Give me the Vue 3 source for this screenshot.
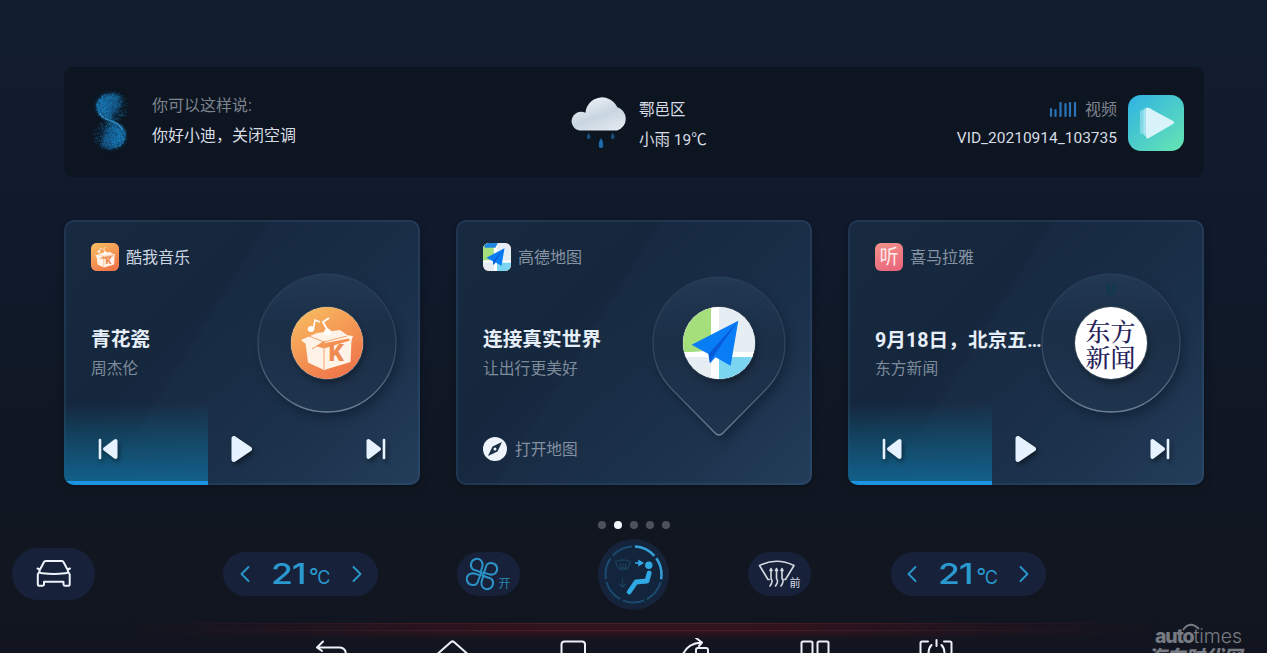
<script setup>
const cards = [
  {
    kind: 'music',
    app: '酷我音乐',
    title: '青花瓷',
    subtitle: '周杰伦',
    progress: 144,
    active: true,
  },
  {
    kind: 'map',
    app: '高德地图',
    title: '连接真实世界',
    subtitle: '让出行更美好',
    action: '打开地图',
  },
  {
    kind: 'radio',
    app: '喜马拉雅',
    title: '9月18日，北京五…',
    subtitle: '东方新闻',
    progress: 144,
  },
]

const activePage = 1

// Particle cloud of the voice assistant logo. The two lobes mirror each other.
const particles = buildParticles(1500)

function buildParticles(count) {
  let seed = 11
  const random = () => {
    seed = (seed * 16807) % 2147483647
    return seed / 2147483647
  }
  const list = []
  while (list.length < count) {
    const angle = random() * Math.PI * 2
    const radius = Math.sqrt(random()) + random() * 0.12
    const x = 30 + Math.cos(angle) * radius * 15.5
    const y = 18 + Math.sin(angle) * radius * 13.5
    const fade = Math.max(0, Math.min(1, (x - 14) / 32))
    if (random() < fade * 0.85)
      continue
    const mirrored = list.length % 2
    list.push({
      x: (mirrored ? 56 - x : x).toFixed(1),
      y: (mirrored ? 64 - y : y).toFixed(1),
      o: (0.7 - fade * 0.45).toFixed(2),
    })
  }
  return list
}
</script>

<template>
  <div class="screen">
    <svg class="defs" width="0" height="0">
      <defs>
        <linearGradient id="orange" x1="0" y1="0" x2="0.6" y2="1">
          <stop offset="0" stop-color="#f8c162" />
          <stop offset="1" stop-color="#f0774a" />
        </linearGradient>
        <linearGradient id="rim" x1="0" y1="0" x2="0" y2="1">
          <stop offset="0" stop-color="#5f7c9c" stop-opacity="0.12" />
          <stop offset="0.55" stop-color="#7b93ad" stop-opacity="0.3" />
          <stop offset="1" stop-color="#93a6ba" stop-opacity="0.7" />
        </linearGradient>
        <linearGradient id="plate" x1="0" y1="0" x2="0" y2="1">
          <stop offset="0" stop-color="#243b55" stop-opacity="0.9" />
          <stop offset="0.4" stop-color="#1b2f47" />
          <stop offset="1" stop-color="#1f344d" />
        </linearGradient>
      </defs>
      <symbol id="kuwo" viewBox="0 0 72 72">
        <rect width="72" height="72" fill="url(#orange)" />
        <g fill="#fff3e8">
          <path d="M14.500 36 33 41.500V63L17 55.500Z" />
          <path d="M33 41.500 60.500 33 59.500 55 33 63Z" />
          <path d="M10 33 26 26 34 33 21 42Z" />
          <path d="M26 26 49 23 60.500 31 34 36Z" />
          <path d="M55 28 62 29 60 35Z" />
        </g>
        <path d="M33 41.500V62M18 29 33 35 56 29M33 35V41M21 42 34 34" fill="none" stroke="#f3a26c" stroke-width="1" />
        <g fill="#fff" stroke="#fff">
          <ellipse cx="20" cy="22" rx="3" ry="2.500" />
          <path d="M22.500 21 24 13 29 15" fill="none" stroke-width="1.600" />
          <circle cx="36.500" cy="25" r="3" />
          <path d="M37 24 32 15 38 11" fill="none" stroke-width="1.800" />
        </g>
        <text x="37.500" y="54" class="box-letter">K</text>
      </symbol>
      <symbol id="amap" viewBox="0 0 72 72">
        <rect width="72" height="72" fill="#e6edf3" />
        <path d="M0 0H28V43L0 46Z" fill="#a4df7c" />
        <path d="M36 50H72V72H36Z" fill="#79d5f0" />
        <path d="M28 0H36V72H28ZM0 45H72V50H0Z" fill="#fff" />
        <path d="M55.300 13.700 8.600 37.700 25.500 47 27 56.300 32.600 50.300 47.600 58.700Z" fill="#087df5" />
        <path d="M55.300 13.700 25.500 47 27 56.300 31 48Z" fill="#075bd8" />
      </symbol>
    </svg>

    <header class="status-bar">
      <div class="assistant">
        <svg class="swirl" width="56" height="66" viewBox="0 0 56 66">
          <defs>
            <filter id="haze" x="-40%" y="-40%" width="180%" height="180%">
              <feGaussianBlur stdDeviation="2.2" />
            </filter>
          </defs>
          <g filter="url(#haze)" fill="#14639c" opacity="0.75">
            <path d="M28 31C18 29 12 22 14 14C17 5 28 3 36 7C40 14 32 20 28 31Z" />
            <path d="M28 33C38 35 44 42 42 50C39 59 28 61 20 57C16 50 24 44 28 33Z" />
          </g>
          <circle v-for="(p, i) in particles" :key="i" :cx="p.x" :cy="p.y" r="0.5" :opacity="p.o" fill="#1d86c4" />
          <path d="M17 24C20 30 25 31 28 32C31 33 36 34 39 40" fill="none" stroke="#4aa9df" stroke-width="1.2" stroke-linecap="round" opacity="0.7" />
        </svg>
        <div class="lines">
          <span class="muted">你可以这样说:</span>
          <span>你好小迪，关闭空调</span>
        </div>
      </div>

      <div class="weather">
        <svg width="60" height="60" viewBox="0 0 56 56">
          <defs>
            <linearGradient id="cloud" x1="0.2" y1="0" x2="0.8" y2="1">
              <stop offset="0" stop-color="#f0f3f7" />
              <stop offset="0.55" stop-color="#c8d5e0" />
              <stop offset="1" stop-color="#e3e9ef" />
            </linearGradient>
          </defs>
          <path d="M10.500 35A8.800 8.800 0 1 1 13.500 18.500A15.500 15.500 0 0 1 43 13A11.500 11.500 0 0 1 43 35Z" fill="url(#cloud)" />
          <path d="M16.500 38c-4 6 4 6 0 0zM39 38c-4 6 4 6 0 0z" fill="#1d4f7c" stroke="#1d4f7c" />
          <path d="M28 43c-6 10.500 6 10.500 0 0z" fill="#1d6cae" stroke="#1d6cae" />
        </svg>
        <div class="lines">
          <span>鄠邑区</span>
          <span>小雨 19℃</span>
        </div>
      </div>

      <div class="media">
        <div class="lines right">
          <span class="muted source">
            <svg width="28" height="16" viewBox="0 0 28 16">
              <path d="M2 7V14M6.500 8V14M11.500 1V14M16.500 2V14M21 1V14M26 1V14" stroke="#2b72b8" stroke-width="2.200" stroke-linecap="round" />
            </svg>
            视频
          </span>
          <span class="file">VID_20210914_103735</span>
        </div>
        <svg width="56" height="56" viewBox="0 0 56 56">
          <defs>
            <linearGradient id="teal" x1="0" y1="0" x2="0.9" y2="1">
              <stop offset="0" stop-color="#2fb2e4" />
              <stop offset="1" stop-color="#64e3b4" />
            </linearGradient>
          </defs>
          <rect width="56" height="56" rx="13" fill="url(#teal)" />
          <rect x="12" y="15" width="10" height="24" rx="2" fill="#a8e5f3" opacity="0.6" />
          <rect x="15.500" y="13" width="8" height="28" rx="2" fill="#b5e9f5" opacity="0.7" />
          <path d="M21 13 45 26Q47.500 27.500 45 29L21 43Q18 44.500 18 41.500V14.500Q18 11.500 21 13Z" fill="#d8f3fa" />
        </svg>
      </div>
    </header>

    <main class="cards">
      <section v-for="card in cards" :key="card.kind" class="card" :class="card.kind">
        <div v-if="card.progress" class="progress" :style="{ width: `${card.progress}px` }" />

        <svg v-if="card.kind === 'map'" class="disc" width="150" height="180" viewBox="0 0 150 180">
          <path class="plate" d="M75 168Q77 168 79 166L122 122.400A66 66 0 1 0 28 122.400L71 166Q73 168 75 168Z" />
        </svg>
        <svg v-else class="disc" width="150" height="180" viewBox="0 0 150 180">
          <circle class="plate" cx="75" cy="76" r="69" />
          <path v-if="card.kind === 'radio'" d="M72 16V24Q75 29 78 24V16" fill="none" stroke="#13384f" stroke-width="3.500" />
        </svg>

        <div class="cover">
          <svg v-if="card.kind === 'music'" width="72" height="72"><use href="#kuwo" /></svg>
          <svg v-else-if="card.kind === 'map'" width="72" height="72"><use href="#amap" /></svg>
          <span v-else>东方<br>新闻</span>
        </div>

        <div class="app" :class="{ active: card.active }">
          <span class="app-icon">
            <svg v-if="card.kind === 'music'" width="28" height="28" viewBox="0 0 72 72"><use href="#kuwo" /></svg>
            <svg v-else-if="card.kind === 'map'" width="28" height="28" viewBox="0 0 72 72">
              <use href="#amap" />
              <path d="M4 0H38L32 12H4Z" fill="#2186dd" />
            </svg>
            <b v-else>听</b>
          </span>
          <span class="app-name">{{ card.app }}</span>
        </div>

        <div class="info">
          <h2>{{ card.title }}</h2>
          <p>{{ card.subtitle }}</p>
        </div>

        <div v-if="card.action" class="action">
          <svg width="24" height="24" viewBox="0 0 24 24">
            <circle cx="12" cy="12" r="12" fill="#edf4fb" />
            <path d="M19 5 14.500 14.500 5 19 9.500 9.500Z" fill="#1b2f47" />
            <circle cx="12" cy="12" r="1.500" fill="#edf4fb" />
          </svg>
          <span>{{ card.action }}</span>
        </div>
        <div v-else class="controls">
          <svg width="21" height="22" viewBox="0 0 21 22">
            <path d="M2 2V20" stroke-width="2.600" fill="none" />
            <path d="M17.500 3V19L7 11Z" stroke-width="4" />
          </svg>
          <svg width="22" height="28" viewBox="0 0 22 28">
            <path d="M3 3.500V24.500L18.500 14Z" stroke-width="5" />
          </svg>
          <svg width="21" height="22" viewBox="0 0 21 22">
            <path d="M19 2V20" stroke-width="2.600" fill="none" />
            <path d="M3.500 3V19L14 11Z" stroke-width="4" />
          </svg>
        </div>
      </section>
    </main>

    <div class="dots">
      <i v-for="n in 5" :key="n" :class="{ on: n - 1 === activePage }" />
    </div>

    <div class="climate">
      <div class="pill car">
        <svg width="36" height="30" viewBox="0 0 36 30">
          <path d="M9.500 2H26Q27 2 27.500 3L32 11.500Q32.500 14 29 14.300Q18 15.700 6.500 14.300Q3 14 3.500 11.500L8 3Q8.500 2 9.500 2ZM1.500 9.500 4 10.500M34 9.500 31.500 10.500M3.500 12.500 1.800 15.500V25.500Q1.800 26.800 3 26.800H6.500Q7.800 26.800 8 25.500V22.700H27.500V25.500Q27.800 26.800 29 26.800H32.500Q33.700 26.800 33.700 25.500V15.500L32 12.500" />
        </svg>
      </div>

      <div class="pill temp">
        <svg width="10" height="16" viewBox="0 0 10 16"><path d="M8.500 1 1.500 8 8.500 15" /></svg>
        <span class="value"><span class="digits">21</span><sup>°</sup><small>C</small></span>
        <svg width="10" height="16" viewBox="0 0 10 16"><path d="M1.500 1 8.500 8 1.500 15" /></svg>
      </div>

      <div class="pill fan">
        <svg width="34" height="34" viewBox="-17 -17 34 34">
          <path
            v-for="angle in [0, 90, 180, 270]" :key="angle" :transform="`rotate(${angle})`"
            d="M-1 -1C-3.500 -4 -7 -3 -9.500 -5C-12.500 -8 -11 -14 -6.500 -15C-1.500 -16 1.200 -12 .5 -8C0 -5 -1.500 -4 -1 -1"
          />
        </svg>
        <span>开</span>
      </div>

      <div class="dial">
        <svg width="71" height="71" viewBox="-35.500 -35.500 71 71">
          <circle r="35.500" fill="#16233a" />
          <circle r="32" fill="#13253c" />
          <circle class="ring" r="28" transform="rotate(-87)" />
          <circle class="ring lit" r="28" transform="rotate(-87)" />
          <g fill="none" stroke="#1a3f5b" stroke-width="1.300">
            <path d="M-18 -13Q-10 -16 -3 -13L-6 -6H-15ZM-13 -4V-11M-10.500 -4V-11M-8 -4V-11M-11 4V12M-14 9.500 -11 12.500 -8 9.500" />
          </g>
          <path d="M1.500 -11.500H5.500M5.500 -13.500 9 -11.500 5.500 -9.500Z" fill="#35a6e6" stroke="#35a6e6" stroke-width="1.600" />
          <circle cx="15.300" cy="-9.200" r="3.700" fill="#2fa8e4" />
          <path d="M15.700 -1.500 13.500 6.500 2.500 7.500 -4.300 17.500" fill="none" stroke="#2fa8e4" stroke-width="4.800" stroke-linecap="round" stroke-linejoin="round" />
        </svg>
      </div>

      <div class="pill defrost">
        <svg width="37" height="28" viewBox="0 0 37 28">
          <path d="M1.500 5.500Q18.500 -3 36 5.500L27.500 19.500H25.500M1.500 5.500 10 19.500H11.500" />
          <path d="M12 26Q15.500 21 13 18.500V9M17.500 26Q21 21 18.500 18.500V9M23 26Q26.500 21 24 18.500V9M12 10.500 13 8.500 14 10.500M17.500 10.500 18.500 8.500 19.500 10.500M23 10.500 24 8.500 25 10.500" />
        </svg>
        <span>前</span>
      </div>

      <div class="pill temp">
        <svg width="10" height="16" viewBox="0 0 10 16"><path d="M8.500 1 1.500 8 8.500 15" /></svg>
        <span class="value"><span class="digits">21</span><sup>°</sup><small>C</small></span>
        <svg width="10" height="16" viewBox="0 0 10 16"><path d="M1.500 1 8.500 8 1.500 15" /></svg>
      </div>
    </div>

    <nav class="nav">
      <svg viewBox="0 0 36 30"><path d="M10 3.500 4 9.500H27Q33 10 33 17V30M4 9.500 9 13" /></svg>
      <svg viewBox="0 0 36 30"><path d="M4 15.500 17 4Q18.500 2.700 20 4L33 15.500" /></svg>
      <svg viewBox="0 0 36 30"><path d="M6.500 30V6.500Q6.500 3.500 9.500 3.500H27Q30 3.500 30 6.500V30" /></svg>
      <svg viewBox="0 0 36 30"><path d="M7 16Q12 5.500 25 4.500M20 0 26 4.500 23 8M20 30V12Q20 10 22 10H30Q32 10 32 12V30" /></svg>
      <svg viewBox="0 0 36 30"><path d="M4.500 30V5Q4.500 3.500 6 3.500H14Q15.500 3.500 15.500 5V30M20.500 30V5Q20.500 3.500 22 3.500H30Q31.500 3.500 31.500 5V30" /></svg>
      <svg viewBox="0 0 36 30"><path d="M10 3.500H4Q2.500 3.500 2.500 5V30M26 3.500H32Q33.500 3.500 33.500 5V30M18.500 2V8M13.500 7Q10.500 10 10.500 15M23.500 7Q26.500 10 26.500 15" /></svg>
    </nav>

    <div class="watermark">
      <svg width="18" height="8" viewBox="0 0 18 8"><path d="M1 7Q8 -3 17 6" fill="none" stroke="#777b83" stroke-width="1.800" /></svg>
      <div class="brand"><b>auto</b>times</div>
      <div class="site">汽车时代网</div>
    </div>
  </div>
</template>

<style>
html,
body {
  background: #121722;
  overflow: hidden;
}
</style>

<style scoped>
.screen {
  position: relative;
  display: flex;
  flex-direction: column;
  width: 1267px;
  height: 653px;
  box-sizing: border-box;
  padding-top: 67px;
  overflow: hidden;
  background: linear-gradient(180deg, #121d2f 0%, #101a2c 35%, #101722 72%, #12151f 100%);
  color: #d8dde5;
  font-family: Roboto, "Noto Sans CJK SC", sans-serif;
  font-size: 16px;
}

.screen > * {
  flex: none;
}

svg {
  display: block;
  flex: none;
}

.defs {
  position: absolute;
}

.box-letter {
  font: 900 24px Roboto, sans-serif;
  fill: #ef8a52;
}

/* Status bar */
.status-bar {
  display: grid;
  grid-template-columns: 507px 1fr auto;
  align-items: center;
  height: 110px;
  margin: 0 63px 0 64px;
  padding: 2px 20px 0 0;
  box-sizing: border-box;
  border-radius: 9px;
  background: #0d1521;
}

.assistant,
.weather,
.media {
  display: flex;
  align-items: center;
}

.assistant {
  gap: 13px;
  padding-left: 19px;
}

.swirl {
  margin-top: -3px;
}

.lines {
  display: flex;
  flex-direction: column;
  line-height: 30px;
  padding-bottom: 4px;
  white-space: nowrap;
}

.weather {
  gap: 8px;
}

.weather .lines {
  padding-bottom: 0;
  margin-top: 3px;
  font-size: 15.5px;
}

.media {
  gap: 11px;
}

.media .lines {
  padding-bottom: 0;
  margin-top: 2px;
  line-height: 29px;
}

.right {
  align-items: flex-end;
}

.muted {
  color: #7d838d;
}

.source {
  display: flex;
  align-items: center;
  gap: 8px;
}

.file {
  font-size: 15.5px;
}

/* Cards */
.cards {
  display: flex;
  gap: 36px;
  margin: 43px 63px 0 64px;
}

.card {
  position: relative;
  display: flex;
  flex-direction: column;
  width: 356px;
  height: 265px;
  box-sizing: border-box;
  padding: 23px 34px 0 27px;
  overflow: hidden;
  border-radius: 10px;
  background:
    linear-gradient(122deg, transparent 39%, rgba(80, 120, 165, 0.03) 40%, transparent 75%),
    linear-gradient(135deg, #182a40 0%, #15273d 35%, #1a2f48 65%, #233d5a 100%);
  box-shadow: inset 0 0 0 2px rgba(70, 110, 150, 0.2), 0 2px 8px rgba(0, 0, 0, 0.25);
}

.progress {
  position: absolute;
  left: 0;
  bottom: 0;
  height: 82px;
  box-sizing: border-box;
  border-bottom: 4px solid #1b93e0;
  background: linear-gradient(180deg, rgba(17, 90, 125, 0) 0%, rgba(17, 90, 125, 0.6) 50%, #11608a 100%);
}

.disc {
  position: absolute;
  left: 187.5px;
  top: 47px;
  overflow: visible;
  filter: drop-shadow(4px 6px 5px rgba(5, 15, 30, 0.35));
}

.plate {
  fill: url(#plate);
  stroke: url(#rim);
  stroke-width: 1.3;
}

.cover {
  position: absolute;
  left: 226.5px;
  top: 86.5px;
  display: flex;
  align-items: center;
  justify-content: center;
  width: 72px;
  height: 72px;
  overflow: hidden;
  border-radius: 50%;
  background: #fff;
  box-shadow: 0 0 0 1px #314559, 2px 4px 6px rgba(0, 0, 0, 0.35);
  color: #26225a;
  font: 500 25px/26px "Noto Serif CJK SC", "Noto Sans CJK SC", serif;
}

.app {
  display: flex;
  align-items: center;
  gap: 7px;
  height: 28px;
  color: #8793a2;
}

.app-name {
  margin-top: -2px;
}

.app.active {
  color: #cbd5e0;
}

.app-icon {
  display: flex;
  align-items: center;
  justify-content: center;
  width: 28px;
  height: 28px;
  overflow: hidden;
  border-radius: 6px;
  background: linear-gradient(160deg, #f2938a, #e9627a);
}

.app-icon b {
  color: #ffe9ea;
  font-size: 19px;
  font-weight: 400;
  line-height: 28px;
  transform: translateY(1px) scaleY(1.05);
}

.info {
  position: relative;
  margin-top: 53.5px;
  white-space: nowrap;
}

.radio .info {
  margin-top: 55px;
}

h2 {
  margin: 0;
  color: #e6eef7;
  font-size: 19.7px;
  font-weight: 700;
  line-height: 30px;
}

p {
  margin: 0;
  color: #7e8b9b;
  font-size: 15.8px;
  line-height: 28px;
}

.radio p {
  margin-top: -1px;
}

.action {
  position: relative;
  display: flex;
  align-items: center;
  gap: 8px;
  margin-top: 54px;
  height: 24px;
  color: #8290a1;
  font-size: 15.7px;
}

.action span {
  margin-top: -1px;
}

.controls {
  position: relative;
  display: flex;
  align-items: center;
  justify-content: space-between;
  margin-top: 52.5px;
  padding-left: 7px;
  height: 28px;
}

.radio .controls {
  margin-top: 52px;
}

.controls svg {
  fill: #e6f2ff;
  stroke: #e6f2ff;
  stroke-linejoin: round;
  stroke-linecap: round;
  filter: drop-shadow(2px 3px 2px rgba(0, 0, 0, 0.4));
}

/* Pager */
.dots {
  display: flex;
  gap: 8px;
  margin: 35.5px 0 0 597.5px;
}

.dots i {
  width: 8px;
  height: 8px;
  border-radius: 50%;
  background: #4d525c;
}

.dots .on {
  background: #f4f7fc;
}

/* Climate controls */
.climate {
  display: flex;
  align-items: center;
  gap: 78.5px;
  height: 72px;
  margin-top: 9.5px;
  padding-left: 12px;
  color: #2999d0;
}

.pill {
  display: flex;
  align-items: center;
  justify-content: center;
  flex: none;
  height: 44px;
  border-radius: 26px;
  background: #17223a;
}

.pill svg {
  fill: none;
  stroke: currentColor;
  stroke-width: 1.8;
  stroke-linecap: round;
  stroke-linejoin: round;
}

.car {
  width: 83px;
  height: 52px;
  margin-right: 49.5px;
  color: #edf2fb;
}

.car svg {
  stroke-width: 2;
}

.temp {
  width: 155px;
  gap: 21px;
}

.temp:last-child {
  margin-left: 1.5px;
}

.temp .value {
  display: flex;
  align-items: baseline;
  width: 60px;
  height: 34px;
  font: 500 28.5px/34px Inter, sans-serif;
}

.digits {
  width: 39px;
  letter-spacing: -1px;
  transform: scaleX(1.25);
  transform-origin: 0 50%;
}

.value sup {
  width: 8.5px;
  font-size: 22px;
  font-weight: 400;
  line-height: 0;
  vertical-align: 0;
}

.value small {
  font-size: 18px;
  font-weight: 400;
}

.fan,
.defrost {
  width: 63px;
}

.fan svg {
  stroke: #2c93c6;
  stroke-width: 2;
}

.fan span {
  margin: 17px 0 0 -1px;
  color: #2780ac;
  font-size: 12px;
}

.defrost {
  color: #d5dae2;
}

.defrost svg {
  stroke-width: 1.6;
}

.defrost span {
  margin: 16px 0 0 -5px;
  font-size: 11px;
}

.dial {
  flex: none;
}

.ring {
  fill: none;
  stroke: #1c4a6e;
  stroke-width: 2;
  stroke-dasharray: 22.13 3;
}

.ring.lit {
  stroke: #36a0d8;
  stroke-width: 2.4;
  stroke-dasharray: 22.13 3 22.13 200;
}

/* System navigation */
.nav {
  position: relative;
  display: flex;
  margin-top: 13px;
  padding-left: 270px;
  height: 31px;
}

.nav::before {
  content: "";
  position: absolute;
  left: 130px;
  right: 110px;
  top: 0;
  height: 16px;
  border-top: 1.5px solid #4f1b25;
  background: linear-gradient(180deg, #33131d 0 6px, #48202a 6px 7px, #37131d 7px, rgba(40, 15, 25, 0) 100%);
  mask-image: linear-gradient(90deg, transparent, #000 40%, #000 60%, transparent);
}

.nav svg {
  position: relative;
  width: 36px;
  height: 30px;
  margin: 15px 42.5px 0;
  fill: none;
  stroke: #edf0f8;
  stroke-width: 2;
  stroke-linecap: round;
  stroke-linejoin: round;
}

.watermark {
  position: absolute;
  left: 1149px;
  top: 626px;
  color: #777b83;
  white-space: nowrap;
}

.watermark svg {
  position: absolute;
  left: 33px;
  top: -3px;
}

.brand {
  margin-left: 6px;
  font: 300 19.5px/20px Inter, sans-serif;
  letter-spacing: 0;
}

.brand b {
  font-weight: 800;
  letter-spacing: -1.2px;
}

.site {
  margin-left: -2px;
  font: italic 900 19px/19px "Noto Sans CJK SC", sans-serif;
}
</style>
